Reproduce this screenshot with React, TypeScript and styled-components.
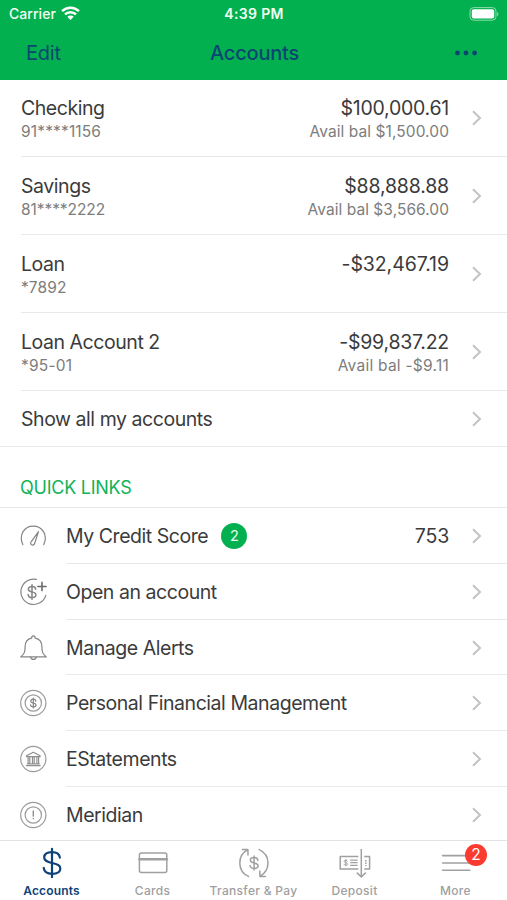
import React from "react";
import styled, { createGlobalStyle } from "styled-components";

const Global = createGlobalStyle`
  * { box-sizing: border-box; }
  body { margin: 0; background: #fff; }
`;

const Screen = styled.div`
  width: 507px;
  height: 900px;
  display: flex;
  flex-direction: column;
  overflow: hidden;
  background: #fff;
  color: #3b3b3b;
  font-family: Inter, "Liberation Sans", sans-serif;
`;

const Header = styled.header`
  flex: none;
  height: 80px;
  background: #03b04f;
`;

const StatusBar = styled.div`
  height: 27px;
  padding: 0 8px 0 9px;
  display: grid;
  grid-template-columns: 1fr auto 1fr;
  align-items: center;
  color: #f2fff4;
  font-size: 14px;
`;

const Carrier = styled.div`
  display: flex;
  align-items: center;
  gap: 5px;
  font-weight: 500;
  letter-spacing: 0.05px;
`;

const Clock = styled.div`
  font-weight: 600;
  letter-spacing: 0.35px;
`;

const Battery = styled.svg`
  justify-self: end;
`;

const NavBar = styled.div`
  height: 53px;
  padding: 0 29px 1px 26px;
  display: grid;
  grid-template-columns: 184px 1fr auto;
  align-items: center;
  color: #0b4672;
  font-size: 20px;
`;

const EditButton = styled.div`
  letter-spacing: -0.2px;
`;

const Title = styled.div`
  font-weight: 500;
  letter-spacing: -0.2px;
`;

const Content = styled.main`
  flex: 1;
  min-height: 0;
  overflow: hidden;
`;

const AccountRow = styled.div<{ $height: number }>`
  height: ${(p) => p.$height}px;
  margin-left: 21px;
  padding-right: 25px;
  display: flex;
  align-items: center;
  border-bottom: 1px solid #e9e9e9;
`;

const Lines = styled.div<{ $end?: boolean }>`
  display: flex;
  flex-direction: column;
  align-items: ${(p) => (p.$end ? "flex-end" : "flex-start")};
  padding-top: 4px;
  margin-left: ${(p) => (p.$end ? "auto" : "0")};
  margin-right: ${(p) => (p.$end ? "23px" : "0")};
`;

const Label = styled.div<{ $ls?: number }>`
  height: 24px;
  line-height: 24px;
  font-size: 19.5px;
  letter-spacing: ${(p) => p.$ls ?? -0.45}px;
  white-space: nowrap;
`;

const Detail = styled.div<{ $ls?: number }>`
  height: 24px;
  line-height: 24px;
  font-size: 15.5px;
  color: #7d7d7d;
  letter-spacing: ${(p) => p.$ls ?? 0.1}px;
  white-space: nowrap;
`;

const ShowAll = styled.div`
  height: 56px;
  padding: 1px 25px 0 21px;
  display: flex;
  align-items: center;
  justify-content: space-between;
  border-bottom: 1px solid #e9e9e9;
`;

const SectionTitle = styled.h2`
  margin: 0;
  height: 61px;
  padding: 29px 0 0 20px;
  border-bottom: 1px solid #e9e9e9;
  font-size: 18px;
  line-height: 24px;
  font-weight: 400;
  letter-spacing: -0.25px;
  color: #12b259;
`;

const LinkRow = styled.div`
  padding-left: 20px;
  display: flex;
  align-items: center;
`;

const LinkBody = styled.div<{ $height: number }>`
  flex: 1;
  height: ${(p) => p.$height}px;
  margin-left: 19px;
  padding: 1px 25px 0 0;
  display: flex;
  align-items: center;
  border-bottom: 1px solid #e9e9e9;
`;

const CountBadge = styled.span`
  width: 26px;
  height: 26px;
  margin-left: 13px;
  border-radius: 50%;
  background: #03b04f;
  color: #e6ffee;
  font-size: 14.5px;
  line-height: 26px;
  text-align: center;
`;

const Trailing = styled.div`
  margin-left: auto;
  display: flex;
  align-items: center;
  gap: 23px;
`;

const TabBar = styled.nav`
  flex: none;
  height: 60px;
  border-top: 1px solid #e2e2e2;
  display: grid;
  grid-template-columns: repeat(5, 101px);
  padding-left: 1px;
  background: #fff;
`;

const Tab = styled.div<{ $active?: boolean }>`
  position: relative;
  display: flex;
  flex-direction: column;
  align-items: center;
  padding-top: 4px;
  color: ${(p) => (p.$active ? "#0e4379" : "#a0a0a0")};
`;

const TabLabel = styled.span<{ $active?: boolean }>`
  margin-top: 2px;
  font-size: 12px;
  line-height: 16px;
  font-weight: ${(p) => (p.$active ? 600 : 500)};
  letter-spacing: ${(p) => (p.$active ? 0.15 : 0.3)}px;
  white-space: nowrap;
`;

const TabBadge = styled.span`
  position: absolute;
  top: 3px;
  left: 60px;
  width: 22px;
  height: 22px;
  border-radius: 50%;
  background: #fb3b30;
  color: #fff;
  font-size: 15.5px;
  line-height: 22px;
  text-align: center;
`;

const Chevron = () => (
  <svg width="10" height="16" viewBox="0 0 10 16" fill="none" stroke="#c3c3c5" strokeWidth="2">
    <path d="M1 1.2 8 8 1 14.8" />
  </svg>
);

const Wifi = () => (
  <svg width="19" height="15" viewBox="0 0 19 15" fill="none" stroke="#fff" strokeWidth="2.5">
    <path d="M1.1 5.1a12 12 0 0 1 16.8 0" />
    <path d="M4 8.4a7.8 7.8 0 0 1 11 0" />
    <path d="M9.5 14 6.3 10.8a4.5 4.5 0 0 1 6.4 0Z" fill="#fff" stroke="none" />
  </svg>
);

const iconProps = {
  width: 27,
  height: 28,
  viewBox: "0 0 27 28",
  fill: "none",
  stroke: "#858585",
  strokeWidth: 1.2,
  strokeLinecap: "round" as const,
  strokeLinejoin: "round" as const,
};

type DollarProps = { x: number; y: number; w: number; h: number; sw: number };

const DollarLines = ({ x, y, w, h, sw }: DollarProps) => {
  const px = (n: number) => (x + (n * w) / 2).toFixed(2);
  const py = (n: number) => (y + n * h * 0.38).toFixed(2);
  const pt = (a: number, b: number) => `${px(a)} ${py(b)}`;
  return (
    <g strokeWidth={sw}>
      <path
        d={`M${pt(0.95, -0.5)}C${pt(0.88, -0.84)} ${pt(0.5, -1)} ${pt(0, -1)}
        C${pt(-0.58, -1)} ${pt(-0.94, -0.82)} ${pt(-0.94, -0.5)}
        C${pt(-0.94, -0.14)} ${pt(-0.45, -0.09)} ${pt(0, 0)}
        C${pt(0.5, 0.1)} ${pt(1, 0.16)} ${pt(1, 0.5)}
        C${pt(1, 0.82)} ${pt(0.6, 1)} ${pt(0, 1)}
        C${pt(-0.56, 1)} ${pt(-0.94, 0.84)} ${pt(-1, 0.46)}`}
      />
      <path d={`M${x} ${y - h / 2}V${y + h / 2}`} />
    </g>
  );
};

const GaugeIcon = () => (
  <svg {...iconProps}>
    <path d="M2.8 22.6C-1.7 12.6 4.6 4.2 13.3 4.2S28.3 12.6 23.8 22.6" />
    <path d="M18.5 9.6 11.3 19.6a2 2 0 1 0 3.3 1.9Z" />
  </svg>
);

const OpenIcon = () => (
  <svg {...iconProps}>
    <path d="M16.4 1.4A12.7 12.7 0 1 0 25.8 17.3" />
    <DollarLines x={12} y={14} w={7.8} h={14.6} sw={1.5} />
    <path d="M22 4.4v8.2M17.9 8.5h8.2" strokeWidth="1.6" stroke="#6c6c6c" />
  </svg>
);

const BellIcon = () => (
  <svg {...iconProps}>
    <path d="M11.6 4.2c0-3.1 3.6-3.1 3.6 0 5 1 6.7 4.4 6.7 8.5 0 5.4.7 7 4.4 10.2H.7c3.7-3.2 4.4-4.8 4.4-10.2 0-4.1 1.7-7.5 6.5-8.5Z" />
    <path d="M10.7 23.1c.5 3.1 5 3.1 5.5 0" />
  </svg>
);

const Rings = ({ inner }: { inner?: boolean }) => (
  <g stroke="#9b9b9b">
    <circle cx="13.3" cy="14" r="12.6" />
    {inner && <circle cx="13.3" cy="14" r="8.2" />}
  </g>
);

const CoinIcon = () => (
  <svg {...iconProps}>
    <Rings inner />
    <DollarLines x={13.3} y={14} w={5.4} h={10} sw={1.2} />
  </svg>
);

const BankIcon = () => (
  <svg {...iconProps}>
    <Rings />
    <g stroke="#8f8f8f">
      <path d="M6.5 10.7 13.3 7.2l6.8 3.5v.9H6.5ZM6.5 20.6h13.7M7.4 18.9h11.9" />
      <path d="M8.1 12.2v6.2M9.8 12.2v6.2M12.5 12.2v6.2M14.2 12.2v6.2M16.9 12.2v6.2M18.6 12.2v6.2" />
    </g>
  </svg>
);

const InfoIcon = () => (
  <svg {...iconProps}>
    <Rings inner />
    <path d="M13.3 10v5.2M13.3 17.5v.2" strokeWidth="1.3" />
  </svg>
);

const tabProps = {
  width: 40,
  height: 36,
  viewBox: "0 0 40 36",
  fill: "none",
  stroke: "currentColor",
  strokeWidth: 1.5,
  strokeLinecap: "round" as const,
  strokeLinejoin: "round" as const,
};

const AccountsIcon = () => (
  <svg {...tabProps}>
    <DollarLines x={20} y={18} w={16.6} h={28.5} sw={2.2} />
  </svg>
);

const CardsIcon = () => (
  <svg {...tabProps}>
    <rect x="6.4" y="8" width="27.4" height="19.6" rx="2" />
    <path d="M6.4 14.3h27.4" strokeWidth="2.5" />
  </svg>
);

const TransferIcon = () => (
  <svg {...tabProps}>
    <DollarLines x={20.1} y={18} w={8} h={14.2} sw={1.5} />
    <path d="M14.6 31.4C2.8 26 3.2 10.4 13.9 4.5M8.4 4.6l5.5-.1.1 5.5" />
    <path d="M25.2 4.6C37 10 36.6 25.6 25.9 31.5M31.4 31.4l-5.5.1-.1-5.5" />
  </svg>
);

const DepositIcon = () => (
  <svg {...tabProps} strokeLinecap="butt">
    <path d="M23.4 24H5.2V11.5h18.2M29.2 11.5h5.4V24h-5.4M26.3 4v27.6M21.8 27.6l4.5 4.4 4.5-4.4" />
    <path d="M15.2 15.1h7.4M15.2 17.7h7.4M15.2 20.3h7.4" strokeWidth="1.2" />
    <path d="M30.8 15v6" strokeDasharray="1.5 1" />
    <DollarLines x={10.8} y={17.7} w={3.4} h={6.8} sw={1} />
  </svg>
);

const MenuIcon = () => (
  <svg {...tabProps} strokeWidth={1.6}>
    <path d="M6.6 10.6h27.2M6.6 18h27.2M6.6 25.3h27.2" />
  </svg>
);

const accounts = [
  { name: "Checking", number: "91****1156", balance: "$100,000.61", available: "Avail bal $1,500.00", height: 77, numberLs: 0.15, balanceLs: -0.25, availableLs: 0.08 },
  { name: "Savings", number: "81****2222", balance: "$88,888.88", available: "Avail bal $3,566.00", height: 78, numberLs: -0.07, balanceLs: -0.17, availableLs: 0.05 },
  { name: "Loan", number: "*7892", balance: "-$32,467.19", available: "", height: 78, numberLs: 0.1, balanceLs: -0.07, availableLs: 0 },
  { name: "Loan Account 2", number: "*95-01", balance: "-$99,837.22", available: "Avail bal -$9.11", height: 78, numberLs: 0.2, balanceLs: -0.25, availableLs: 0.25 },
];

const links = [
  { label: "My Credit Score", icon: <GaugeIcon />, height: 56, badge: "2", value: "753" },
  { label: "Open an account", icon: <OpenIcon />, height: 56 },
  { label: "Manage Alerts", icon: <BellIcon />, height: 55 },
  { label: "Personal Financial Management", icon: <CoinIcon />, height: 56 },
  { label: "EStatements", icon: <BankIcon />, height: 56 },
  { label: "Meridian", icon: <InfoIcon />, height: 56 },
];

const tabs = [
  { label: "Accounts", icon: <AccountsIcon />, active: true },
  { label: "Cards", icon: <CardsIcon /> },
  { label: "Transfer & Pay", icon: <TransferIcon /> },
  { label: "Deposit", icon: <DepositIcon /> },
  { label: "More", icon: <MenuIcon />, badge: "2" },
];

export default function App() {
  return (
    <Screen>
      <Global />
      <Header>
        <StatusBar>
          <Carrier>
            Carrier <Wifi />
          </Carrier>
          <Clock>4:39 PM</Clock>
          <Battery width="30" height="14" viewBox="0 0 30 14">
            <rect x="1" y="0.6" width="26" height="12.6" rx="3.6" fill="none" stroke="#8fdcae" strokeWidth="1" />
            <rect x="2.8" y="2.2" width="22.4" height="9.4" rx="2" fill="#fff" />
            <path d="M28.2 5v4.2c1.6-.8 1.6-3.4 0-4.2Z" fill="#8fdcae" />
          </Battery>
        </StatusBar>
        <NavBar>
          <EditButton>Edit</EditButton>
          <Title>Accounts</Title>
          <svg width="24" height="6" viewBox="0 0 24 6" fill="#0b4672">
            <circle cx="3.5" cy="3" r="2.4" />
            <circle cx="12" cy="3" r="2.4" />
            <circle cx="20.6" cy="3" r="2.4" />
          </svg>
        </NavBar>
      </Header>
      <Content>
        {accounts.map((a) => (
          <AccountRow key={a.name} $height={a.height}>
            <Lines>
              <Label>{a.name}</Label>
              <Detail $ls={a.numberLs}>{a.number}</Detail>
            </Lines>
            <Lines $end>
              <Label $ls={a.balanceLs}>{a.balance}</Label>
              <Detail $ls={a.availableLs}>{a.available}</Detail>
            </Lines>
            <Chevron />
          </AccountRow>
        ))}
        <ShowAll>
          <Label>Show all my accounts</Label>
          <Chevron />
        </ShowAll>
        <SectionTitle>QUICK LINKS</SectionTitle>
        {links.map((l) => (
          <LinkRow key={l.label}>
            {l.icon}
            <LinkBody $height={l.height}>
              <Label>{l.label}</Label>
              {l.badge && <CountBadge>{l.badge}</CountBadge>}
              <Trailing>
                {l.value && <Label $ls={-0.2}>{l.value}</Label>}
                <Chevron />
              </Trailing>
            </LinkBody>
          </LinkRow>
        ))}
      </Content>
      <TabBar>
        {tabs.map((t) => (
          <Tab key={t.label} $active={t.active}>
            {t.icon}
            <TabLabel $active={t.active}>{t.label}</TabLabel>
            {t.badge && <TabBadge>{t.badge}</TabBadge>}
          </Tab>
        ))}
      </TabBar>
    </Screen>
  );
}
